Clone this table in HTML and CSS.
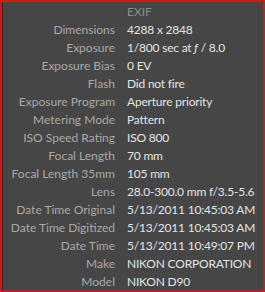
FILE: index.html
```
<!DOCTYPE html>
<html>
<head>
<meta charset="utf-8">
<link rel="stylesheet" href="styles.css">
</head>
<body>
<div class="panel">
  <div class="head"><span></span><span class="title">EXIF</span></div>
  <dl class="grid">
    <dt>Dimensions</dt><dd>4288 x 2848</dd>
    <dt>Exposure</dt><dd>1/800 sec at <i>ƒ</i> / 8.0</dd>
    <dt>Exposure Bias</dt><dd>0 EV</dd>
    <dt>Flash</dt><dd>Did not fire</dd>
    <dt>Exposure Program</dt><dd>Aperture priority</dd>
    <dt>Metering Mode</dt><dd>Pattern</dd>
    <dt>ISO Speed Rating</dt><dd>ISO 800</dd>
    <dt>Focal Length</dt><dd>70 mm</dd>
    <dt>Focal Length 35mm</dt><dd>105 mm</dd>
    <dt>Lens</dt><dd>28.0-300.0 mm f/3.5-5.6</dd>
    <dt>Date Time Original</dt><dd>5/13/2011 10:45:03 AM</dd>
    <dt>Date Time Digitized</dt><dd>5/13/2011 10:45:03 AM</dd>
    <dt>Date Time</dt><dd>5/13/2011 10:49:07 PM</dd>
    <dt>Make</dt><dd>NIKON CORPORATION</dd>
    <dt>Model</dt><dd>NIKON D90</dd>
  </dl>
</div>
</body>
</html>
```
FILE: styles.css
```
html, body {
  margin: 0;
  padding: 0;
  background: #464646;
}

.panel {
  box-sizing: border-box;
  width: 265px;
  height: 292px;
  padding-top: 1px;
  border: 2px solid #c41e1e;
  background: #464646;
  box-shadow: inset 1px 0 0 #2a2a2a;
  font-family: "Lato", "Open Sans", sans-serif;
  font-size: 12px;
  overflow: hidden;
}

.head {
  display: grid;
  grid-template-columns: 113px 1fr;
  column-gap: 12px;
  height: 18px;
  line-height: 18px;
}

.title {
  color: #8c8c8c;
}

.grid {
  margin: 0;
  display: grid;
  grid-template-columns: 113px 1fr;
  column-gap: 12px;
  grid-auto-rows: 18px;
  line-height: 18px;
}

.grid dt {
  text-align: right;
  color: #a9a9a9;
  white-space: nowrap;
}

.grid dd {
  margin: 0;
  color: #e4e4e4;
  white-space: nowrap;
  letter-spacing: -0.2px;
}

.grid i {
  font-style: italic;
}
```
